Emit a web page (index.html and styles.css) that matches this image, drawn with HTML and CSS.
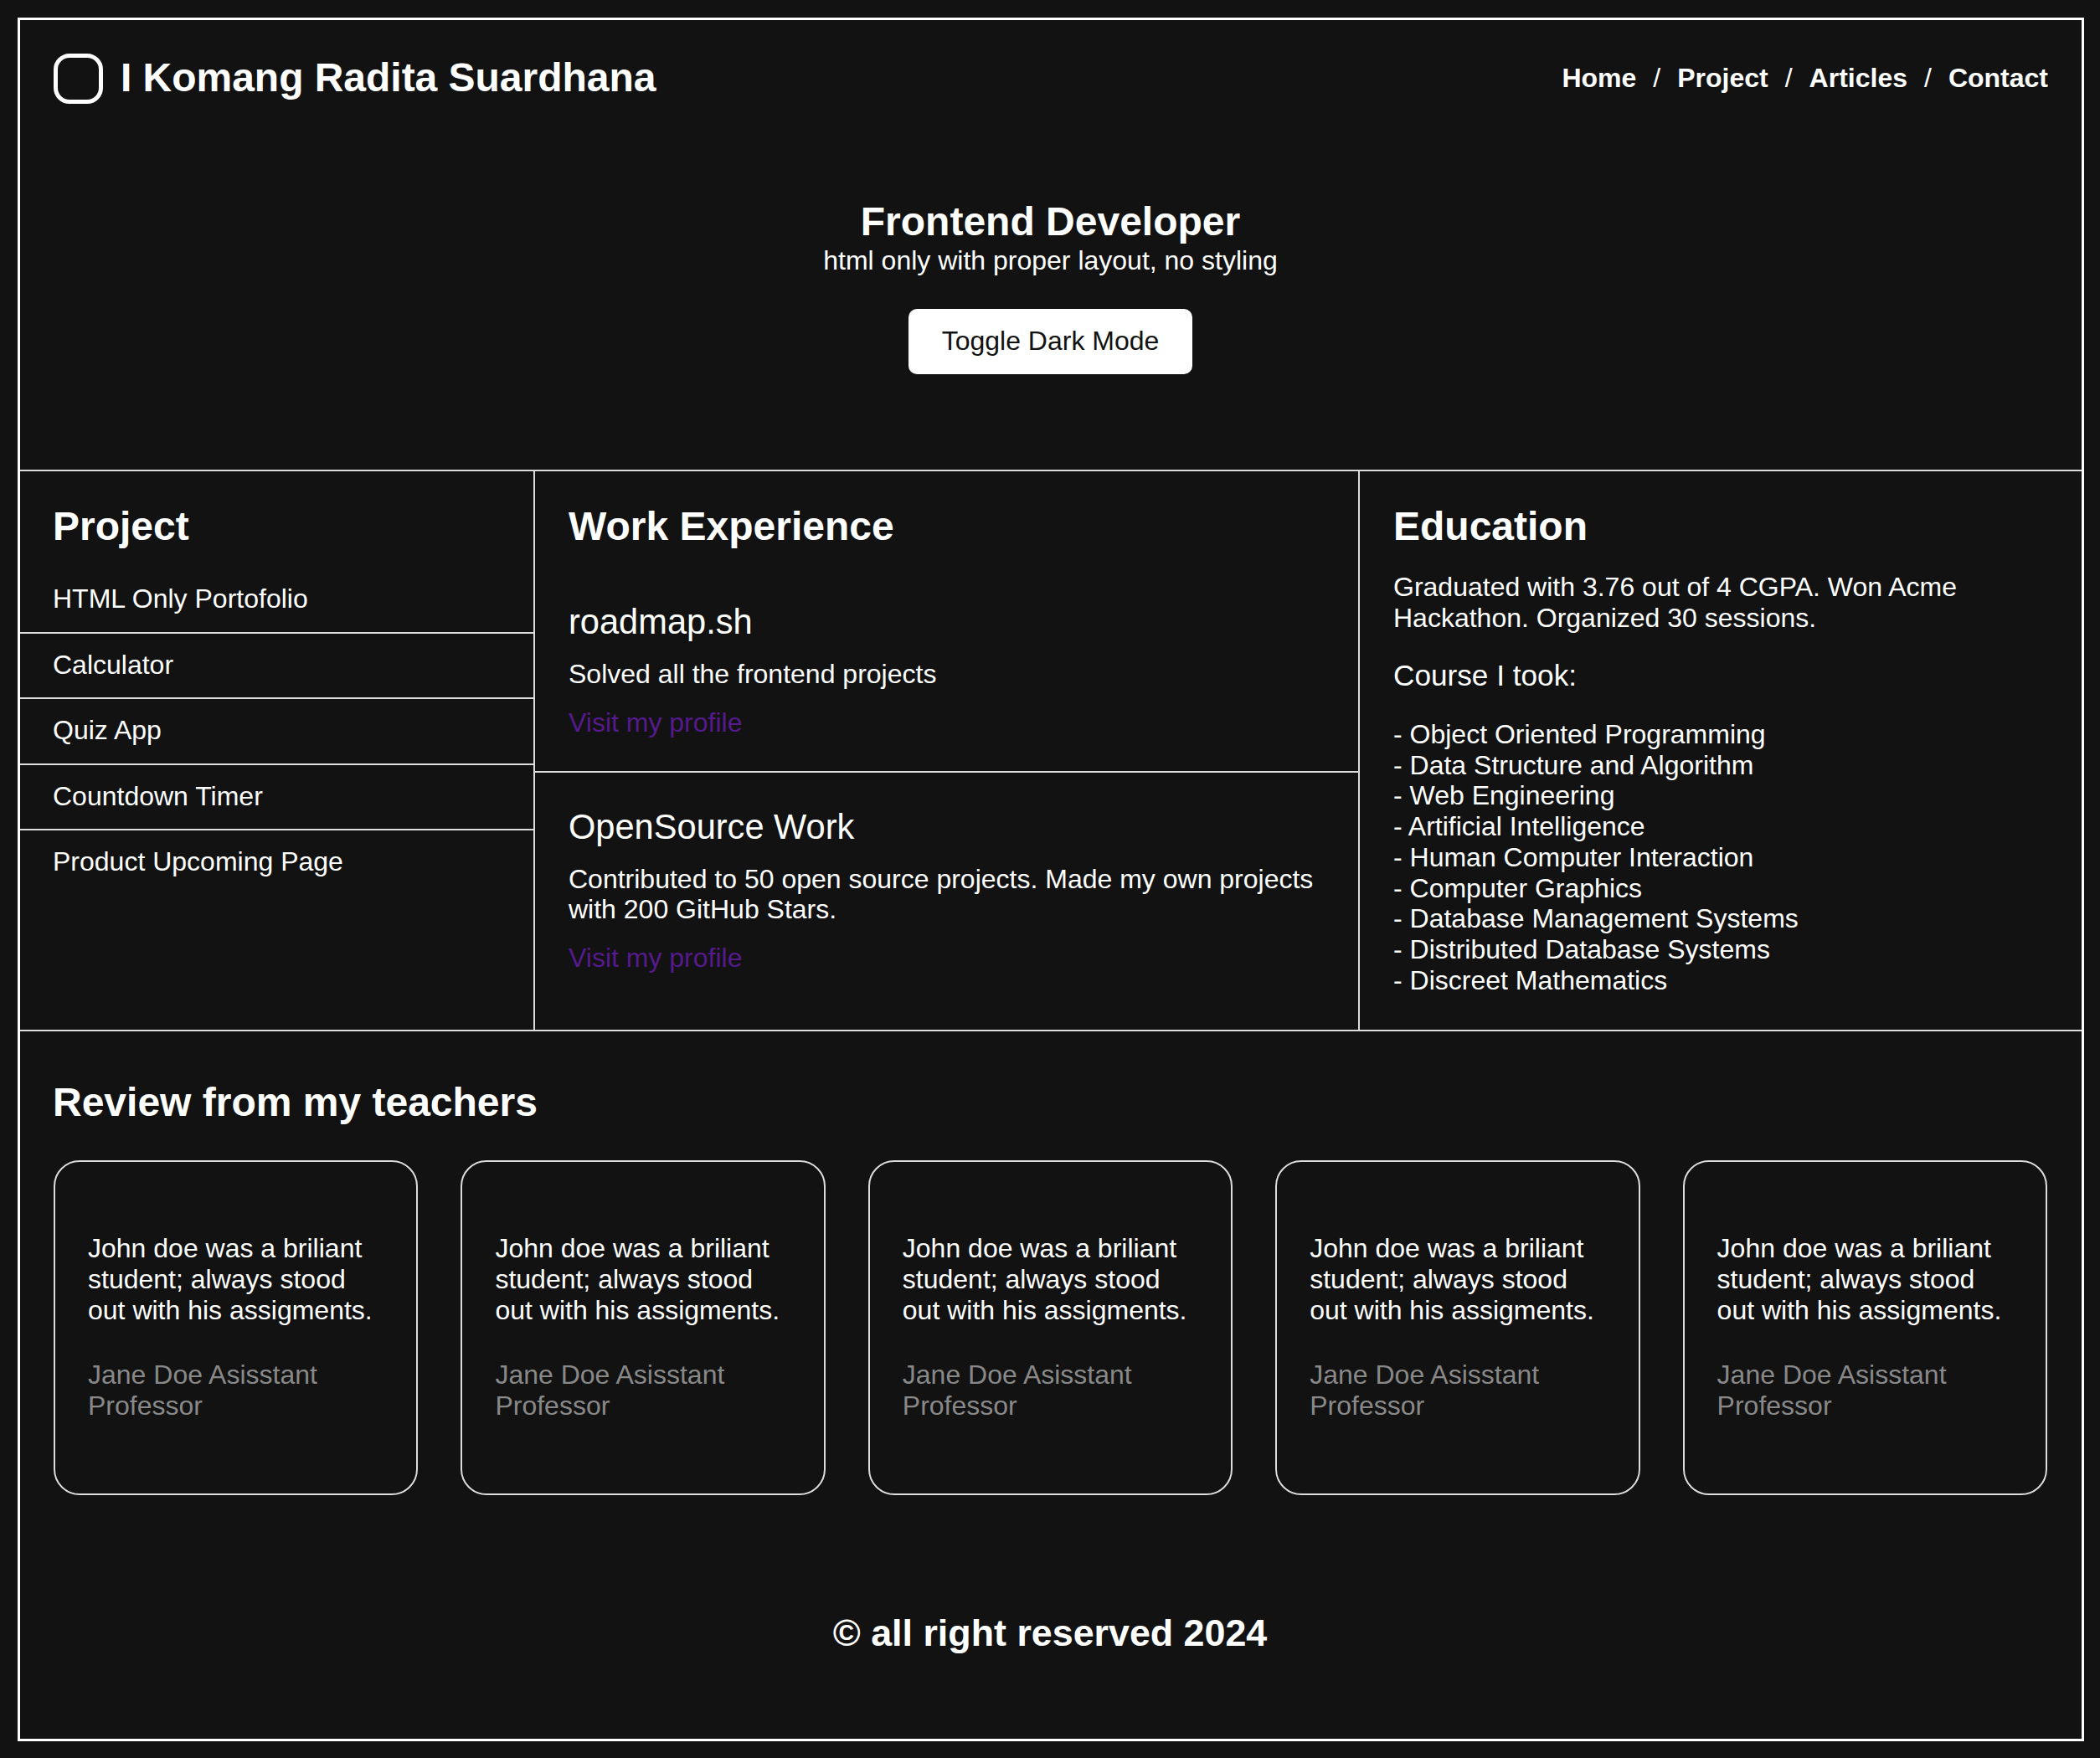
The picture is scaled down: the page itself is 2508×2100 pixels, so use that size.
FILE: index.html
```html
<!DOCTYPE html>
<html lang="en">
<head>
<meta charset="utf-8">
<title>I Komang Radita Suardhana</title>
<link rel="stylesheet" href="styles.css">
</head>
<body>
<div class="page">
  <header class="header">
    <div class="brand"><span class="logo"></span><h1 class="name">I Komang Radita Suardhana</h1></div>
    <nav class="nav"><a href="#">Home</a><span>/</span><a href="#">Project</a><span>/</span><a href="#">Articles</a><span>/</span><a href="#">Contact</a></nav>
  </header>
  <section class="hero">
    <h2 class="title">Frontend Developer</h2>
    <p>html only with proper layout, no styling</p>
    <button class="toggle">Toggle Dark Mode</button>
  </section>
  <main class="columns">
    <section class="projects">
      <h2 class="title">Project</h2>
      <ul>
        <li>HTML Only Portofolio</li>
        <li>Calculator</li>
        <li>Quiz App</li>
        <li>Countdown Timer</li>
        <li>Product Upcoming Page</li>
      </ul>
    </section>
    <section class="work">
      <h2 class="title">Work Experience</h2>
      <article class="job">
        <h3>roadmap.sh</h3>
        <p>Solved all the frontend projects</p>
        <a href="#">Visit my profile</a>
      </article>
      <article class="job">
        <h3>OpenSource Work</h3>
        <p>Contributed to 50 open source projects. Made my own projects with 200 GitHub Stars.</p>
        <a href="#">Visit my profile</a>
      </article>
    </section>
    <section class="education">
      <h2 class="title">Education</h2>
      <p>Graduated with 3.76 out of 4 CGPA. Won Acme Hackathon. Organized 30 sessions.</p>
      <h4>Course I took:</h4>
      <ul>
        <li>- Object Oriented Programming</li>
        <li>- Data Structure and Algorithm</li>
        <li>- Web Engineering</li>
        <li>- Artificial Intelligence</li>
        <li>- Human Computer Interaction</li>
        <li>- Computer Graphics</li>
        <li>- Database Management Systems</li>
        <li>- Distributed Database Systems</li>
        <li>- Discreet Mathematics</li>
      </ul>
    </section>
  </main>
  <section class="reviews">
    <h2 class="title">Review from my teachers</h2>
    <div class="cards">
      <article class="card"><p>John doe was a briliant student; always stood out with his assigments.</p><p class="author">Jane Doe Asisstant Professor</p></article>
      <article class="card"><p>John doe was a briliant student; always stood out with his assigments.</p><p class="author">Jane Doe Asisstant Professor</p></article>
      <article class="card"><p>John doe was a briliant student; always stood out with his assigments.</p><p class="author">Jane Doe Asisstant Professor</p></article>
      <article class="card"><p>John doe was a briliant student; always stood out with his assigments.</p><p class="author">Jane Doe Asisstant Professor</p></article>
      <article class="card"><p>John doe was a briliant student; always stood out with his assigments.</p><p class="author">Jane Doe Asisstant Professor</p></article>
    </div>
  </section>
  <footer class="footer">© all right reserved 2024</footer>
</div>
</body>
</html>
```
FILE: styles.css
```css
* { box-sizing: border-box; margin: 0; padding: 0; }
:root { --line: #dcdcdc; }
body {
  background: #121212;
  color: #fff;
  font: 32px/36.75px "Liberation Sans", Arial, sans-serif;
  padding: 21px 19px 20px 21px;
  height: 2100px;
}
ul { list-style: none; }
a { text-decoration: none; color: inherit; }
.page {
  height: 2059px;
  border: 3px solid #fff;
  display: flex;
  flex-direction: column;
}
.title, .name { font-size: 48px; line-height: 55px; font-weight: bold; }
.header {
  display: flex;
  justify-content: space-between;
  align-items: center;
  padding: 40px 40px 0;
  height: 100px;
}
.brand { display: flex; align-items: center; gap: 21px; }
.logo { width: 59px; height: 60px; border: 5px solid #fff; border-radius: 19px; }
.name { padding-bottom: 4px; letter-spacing: -0.03px; }
.nav { display: flex; gap: 20px; padding-bottom: 2px; }
.nav a { font-weight: bold; }
.hero {
  height: 437px;
  padding: 113px 1px 0 0;
  display: flex;
  flex-direction: column;
  align-items: center;
}
.hero .title { margin-bottom: 1px; }
.toggle {
  margin-top: 39px;
  width: 339px;
  height: 78px;
  border: 0;
  border-radius: 10px;
  background: #fff;
  color: #121212;
  font: inherit;
}
.columns {
  display: grid;
  grid-template-columns: 615px 985px 1fr;
  height: 671px;
  border-top: 2px solid var(--line);
  border-bottom: 2px solid var(--line);
}
.columns > section { padding-top: 38px; }
.projects { border-right: 2px solid var(--line); }
.projects .title, .projects li { padding-left: 39px; }
.projects ul { padding-top: 22px; }
.projects li {
  height: 78.5px;
  padding-top: 19px;
  border-bottom: 2px solid var(--line);
}
.projects li:last-child { border-bottom: 0; }
.work { border-right: 2px solid var(--line); }
.work .title { padding-left: 40px; margin-bottom: 21px; }
.job { padding: 42px 40px 39px; display: flex; flex-direction: column; }
.job + .job { border-top: 2px solid var(--line); padding-top: 41px; }
.job h3 { font-size: 41.6px; line-height: 48px; font-weight: normal; margin-bottom: 20px; }
.job a { color: #551a8b; margin-top: 21px; }
.education { padding-left: 40px; padding-right: 40px; }
.education .title { margin-bottom: 27px; }
.education h4 { font-size: 35.2px; line-height: 40px; font-weight: normal; margin: 30px 0 32.4px; }
.reviews { padding: 57px 41px 0 40px; height: 553px; }
.reviews .title { margin-left: -1px; }
.cards {
  display: grid;
  grid-template-columns: repeat(5, 1fr);
  gap: 51px;
  margin-top: 42px;
}
.card {
  height: 400px;
  border: 2px solid var(--line);
  border-radius: 31px;
  padding: 85px 38px 0 39px;
}
.author { color: #888; margin-top: 41px; }
.footer {
  font-size: 44.8px;
  line-height: 52px;
  font-weight: bold;
  text-align: center;
  padding: 139px 2px 0 0;
}
```
